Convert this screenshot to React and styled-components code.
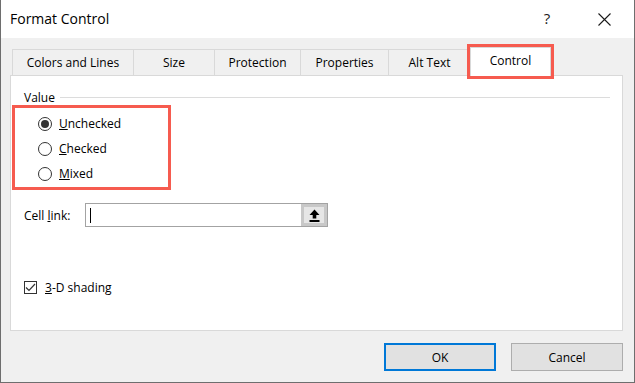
import React from 'react'
import styled, { createGlobalStyle } from 'styled-components'

const GlobalStyle = createGlobalStyle`
  html, body {
    margin: 0;
    padding: 0;
    background: #ffffff;
  }
  * {
    box-sizing: border-box;
  }
`

const tabs = [
  { label: 'Colors and Lines', width: 122 },
  { label: 'Size', width: 82 },
  { label: 'Protection', width: 87 },
  { label: 'Properties', width: 89 },
  { label: 'Alt Text', width: 83 },
  { label: 'Control', width: 81, active: true },
]

const radios = [
  { key: 'U', rest: 'nchecked', checked: true },
  { key: 'C', rest: 'hecked' },
  { key: 'M', rest: 'ixed' },
]

const App = () => {
  return (
    <>
      <GlobalStyle />
      <Window>
        <TitleBar>
          <Title>Format Control</Title>
          <TitleActions>
            <HelpButton>?</HelpButton>
            <CloseButton>
              <svg width="13" height="13" viewBox="0 0 13 13">
                <path d="M0.5 0.5 L12.5 12.5 M12.5 0.5 L0.5 12.5" stroke="#1a1a1a" strokeWidth="1.1" fill="none" />
              </svg>
            </CloseButton>
          </TitleActions>
        </TitleBar>
        <Body>
          <TabRow>
            {tabs.map(t => (
              <Tab key={t.label} $width={t.width} $active={t.active}>
                {t.label}
              </Tab>
            ))}
          </TabRow>
          <Panel>
            <GroupHeader>
              <span>Value</span>
              <GroupLine />
            </GroupHeader>
            <Highlight>
              {radios.map(r => (
                <RadioRow key={r.key}>
                  <RadioCircle $checked={r.checked} />
                  <span><u>{r.key}</u>{r.rest}</span>
                </RadioRow>
              ))}
            </Highlight>
            <LinkRow>
              <span>Cell <u>l</u>ink:</span>
              <LinkInput>
                <Caret />
                <CollapseButton>
                  <svg width="11" height="13" viewBox="0 0 11 13">
                    <path d="M5.5 0.5 L10.5 6 L7.3 6 L7.3 9.5 L3.7 9.5 L3.7 6 L0.5 6 Z" fill="#000" />
                    <rect x="0.5" y="11" width="10" height="2" fill="#000" />
                  </svg>
                </CollapseButton>
              </LinkInput>
            </LinkRow>
            <CheckRow>
              <CheckBox>
                <svg width="11" height="9" viewBox="0 0 11 9">
                  <path d="M1 4.5 L4 7.5 L10 1" stroke="#333" strokeWidth="1.2" fill="none" />
                </svg>
              </CheckBox>
              <span><u>3</u>-D shading</span>
            </CheckRow>
          </Panel>
          <Footer>
            <DialogButton $primary>OK</DialogButton>
            <DialogButton>Cancel</DialogButton>
          </Footer>
        </Body>
      </Window>
    </>
  )
}

const Window = styled.div`
  width: 635px;
  height: 383px;
  display: flex;
  flex-direction: column;
  background: #f0f0f0;
  border-left: 1px solid #6e6e6e;
  border-right: 1px solid #6e6e6e;
  border-bottom: 1px solid #6e6e6e;
  font-family: "Open Sans", "Noto Sans", sans-serif;
  font-size: 12px;
  color: #000;
  overflow: hidden;
`

const TitleBar = styled.div`
  height: 38px;
  flex: none;
  background: #ffffff;
  display: flex;
  align-items: center;
  justify-content: space-between;
  padding-left: 9px;
`

const Title = styled.div`
  font-size: 14px;
  color: #000;
  margin-top: -1px;
`

const TitleActions = styled.div`
  display: flex;
  align-items: center;
  height: 100%;
`

const HelpButton = styled.div`
  width: 54px;
  text-align: center;
  font-size: 15px;
  color: #1a1a1a;
  margin-top: -2px;
`

const CloseButton = styled.div`
  width: 60px;
  height: 100%;
  display: flex;
  align-items: center;
  justify-content: center;
  padding-top: 1px;
`

const Body = styled.div`
  flex: 1;
  display: flex;
  flex-direction: column;
  padding: 11px 11px 0 9px;
`

const TabRow = styled.div`
  display: flex;
  align-items: flex-end;
  padding-left: 3px;
  height: 26px;
  position: relative;
  z-index: 1;
`

const Tab = styled.div`
  width: ${p => p.$width}px;
  height: ${p => (p.$active ? '29px' : '26px')};
  display: flex;
  align-items: center;
  justify-content: center;
  background: ${p => (p.$active ? '#ffffff' : '#f0f0f0')};
  border: 1px solid #d9d9d9;
  border-bottom: none;
  margin-left: -1px;
  margin-bottom: ${p => (p.$active ? '-1px' : '0')};
  outline: ${p => (p.$active ? '3px solid #f65b4f' : 'none')};
  padding-bottom: ${p => (p.$active ? '3px' : '0')};
`

const Panel = styled.div`
  height: 256px;
  background: #ffffff;
  border: 1px solid #d9d9d9;
  padding: 13px 12px 0 13px;
  display: flex;
  flex-direction: column;
`

const GroupHeader = styled.div`
  display: flex;
  align-items: center;
  gap: 5px;
  height: 16px;
`

const GroupLine = styled.div`
  flex: 1;
  height: 1px;
  background: #dcdcdc;
  margin-top: 1px;
`

const Highlight = styled.div`
  width: 159px;
  height: 85px;
  margin: 0 0 0 -12px;
  border: 3px solid #f65b4f;
  padding: 3px 0 0 23px;
  display: flex;
  flex-direction: column;
`

const RadioRow = styled.div`
  height: 25px;
  display: flex;
  align-items: center;
  gap: 7px;
`

const RadioCircle = styled.div`
  width: 14px;
  height: 14px;
  border-radius: 50%;
  border: 1px solid #333333;
  background: #ffffff;
  display: flex;
  align-items: center;
  justify-content: center;

  &::after {
    content: '';
    display: ${p => (p.$checked ? 'block' : 'none')};
    width: 8px;
    height: 8px;
    border-radius: 50%;
    background: #333333;
  }
`

const LinkRow = styled.div`
  display: flex;
  align-items: center;
  margin-top: 13px;
  height: 24px;

  & > span {
    width: 61px;
  }
`

const LinkInput = styled.div`
  width: 243px;
  height: 24px;
  border: 1px solid #a3a3a3;
  background: #ffffff;
  display: flex;
  align-items: center;
  justify-content: space-between;
  padding-left: 4px;
`

const Caret = styled.div`
  width: 1px;
  height: 15px;
  background: #000;
`

const CollapseButton = styled.div`
  width: 26px;
  height: 22px;
  border: 3px solid #c8c8c8;
  background: #e6e6e6;
  display: flex;
  align-items: center;
  justify-content: center;
`

const CheckRow = styled.div`
  display: flex;
  align-items: center;
  gap: 8px;
  margin-top: 52px;
`

const CheckBox = styled.div`
  width: 13px;
  height: 13px;
  border: 1px solid #333333;
  background: #ffffff;
  display: flex;
  align-items: center;
  justify-content: center;
`

const Footer = styled.div`
  display: flex;
  justify-content: flex-end;
  gap: 15px;
  padding-top: 12px;
`

const DialogButton = styled.div`
  width: 112px;
  height: 28px;
  display: flex;
  align-items: center;
  justify-content: center;
  background: #e1e1e1;
  border: ${p => (p.$primary ? '2px solid #0078d7' : '1px solid #adadad')};
`

export default App
